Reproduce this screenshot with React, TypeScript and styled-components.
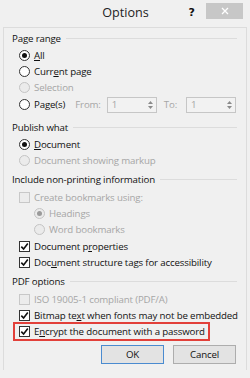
import React from "react";
import styled, { createGlobalStyle, css } from "styled-components";

const Global = createGlobalStyle`
  html, body { margin: 0; padding: 0; background: #f0f0f0; }
  body { font-family: "Open Sans", "Noto Sans", sans-serif; color: #111; }
`;

const Window = styled.div`
  width: 250px;
  height: 378px;
  background: #f0f0f0;
  display: flex;
  flex-direction: column;
  overflow: hidden;
`;

const TitleBar = styled.div`
  height: 27px;
  display: grid;
  grid-template-columns: 1fr auto 1fr;
  align-items: start;
`;

const Title = styled.div`
  grid-column: 2;
  font-size: 12.6px;
  line-height: 26px;
  color: #222;
  padding-left: 1px;
`;

const TitleTools = styled.div`
  grid-column: 3;
  display: flex;
  justify-content: flex-end;
  align-items: center;
  padding: 1px 7px 0 0;
  gap: 11px;
`;

const Help = styled.span`
  font-family: "DejaVu Sans", sans-serif;
  font-weight: bold;
  font-size: 11px;
  line-height: 16px;
  color: #111;
  margin-top: 4px;
`;

const Close = styled.div`
  width: 37px;
  height: 16px;
  background: #c7c7c7;
  color: #fff;
  display: flex;
  align-items: center;
  justify-content: center;
`;

const Frame = styled.div`
  margin: 0 3px 0 3px;
  border: 1px solid #dcdcdc;
  border-bottom: none;
  padding: 2px 9px 6px 8px;
  height: 343px;
  box-sizing: border-box;
  display: flex;
  flex-direction: column;
  font-size: 9.7px;
  letter-spacing: -0.15px;
`;

const Section = styled.div<{ $gap?: number }>`
  display: flex;
  flex-direction: column;
  margin-top: ${(p) => p.$gap ?? 3}px;
`;

const Header = styled.div`
  height: 16px;
  display: flex;
  align-items: center;
  gap: 5px;
  margin-bottom: 1px;
  &::after {
    content: "";
    flex: 1;
    height: 1px;
    background: #dcdcdc;
  }
`;

const Row = styled.div<{ $indent?: number; $tall?: boolean }>`
  height: ${(p) => (p.$tall ? 17 : 16.4)}px;
  display: flex;
  align-items: center;
  padding-left: ${(p) => p.$indent ?? 7}px;
`;

const Highlight = styled.div`
  display: flex;
  align-items: center;
  margin-left: -4px;
  padding: 0 3px 0 4px;
  outline: 2px solid #e2403a;
  height: 15px;
`;

const Label = styled.span<{ $disabled?: boolean }>`
  margin-left: 4px;
  color: ${(p) => (p.$disabled ? "#a6a6a6" : "#111")};
  white-space: nowrap;
  u { text-decoration-thickness: 1px; text-underline-offset: 1px; }
`;

const RadioCircle = styled.span<{ $checked?: boolean; $disabled?: boolean }>`
  width: 11px;
  height: 11px;
  border-radius: 50%;
  box-sizing: border-box;
  border: 1px solid ${(p) => (p.$disabled ? "#c4c4c4" : "#333")};
  background: ${(p) => (p.$disabled ? "#ebebeb" : "#fff")};
  display: flex;
  align-items: center;
  justify-content: center;
  flex: none;
  ${(p) =>
    p.$checked &&
    css`
      &::after {
        content: "";
        width: 5px;
        height: 5px;
        border-radius: 50%;
        background: ${p.$disabled ? "#9a9a9a" : "#111"};
      }
    `}
`;

const CheckBox = styled.span<{ $disabled?: boolean }>`
  width: 11px;
  height: 11px;
  box-sizing: border-box;
  border: 1px solid ${(p) => (p.$disabled ? "#c8c8c8" : "#333")};
  background: ${(p) => (p.$disabled ? "#ececec" : "#fff")};
  display: flex;
  align-items: center;
  justify-content: center;
  flex: none;
`;

const SmallLabel = styled.span<{ $ml: number }>`
  margin-left: ${(p) => p.$ml}px;
  color: #a6a6a6;
`;

const Spin = styled.div<{ $ml: number }>`
  margin-left: ${(p) => p.$ml}px;
  width: 50px;
  height: 16px;
  box-sizing: border-box;
  border: 1px solid #c6c6c6;
  background: #f2f2f2;
  display: flex;
  align-items: center;
  color: #a6a6a6;
  padding-left: 4px;
`;

const SpinValue = styled.span`
  flex: 1;
`;

const SpinArrows = styled.div`
  width: 11px;
  height: 100%;
  display: flex;
  flex-direction: column;
  align-items: center;
  justify-content: center;
  gap: 2px;
`;

const Buttons = styled.div`
  margin-top: auto;
  display: flex;
  justify-content: flex-end;
  gap: 9px;
  padding-right: 1px;
`;

const Button = styled.div<{ $default?: boolean }>`
  width: 63px;
  height: 19px;
  box-sizing: border-box;
  border: 1px solid ${(p) => (p.$default ? "#4a8bd0" : "#adadad")};
  background: #e3e3e3;
  display: flex;
  align-items: center;
  justify-content: center;
  color: #111;
`;

const Tick = () => (
  <svg width="9" height="9" viewBox="0 0 9 9">
    <path d="M1.3 4.6 L3.6 7 L7.8 1.6" fill="none" stroke="#111" strokeWidth="1.6" />
  </svg>
);

const Tri = ({ up }: { up?: boolean }) => (
  <svg width="5" height="3" viewBox="0 0 5 3">
    <path d={up ? "M0 3 L2.5 0 L5 3Z" : "M0 0 L2.5 3 L5 0Z"} fill="#8a8a8a" />
  </svg>
);

const Radio = ({ checked, disabled, indent, children }: { checked?: boolean; disabled?: boolean; indent?: number; children: React.ReactNode }) => (
  <Row $indent={indent}>
    <RadioCircle $checked={checked} $disabled={disabled} />
    <Label $disabled={disabled}>{children}</Label>
  </Row>
);

const Check = ({ checked, disabled, children }: { checked?: boolean; disabled?: boolean; children: React.ReactNode }) => (
  <Row>
    <CheckBox $disabled={disabled}>{checked && <Tick />}</CheckBox>
    <Label $disabled={disabled}>{children}</Label>
  </Row>
);

const SpinBox = ({ ml }: { ml: number }) => (
  <Spin $ml={ml}>
    <SpinValue>1</SpinValue>
    <SpinArrows>
      <Tri up />
      <Tri />
    </SpinArrows>
  </Spin>
);

export default function App() {
  return (
    <Window>
      <Global />
      <TitleBar>
        <Title>Options</Title>
        <TitleTools>
          <Help>?</Help>
          <Close>
            <svg width="8" height="8" viewBox="0 0 8 8">
              <path d="M1 1 L7 7 M7 1 L1 7" stroke="#fff" strokeWidth="1.3" />
            </svg>
          </Close>
        </TitleTools>
      </TitleBar>
      <Frame>
        <Section $gap={0}>
          <Header>Page range</Header>
          <Radio checked><u>A</u>ll</Radio>
          <Radio>Curr<u>e</u>nt page</Radio>
          <Radio disabled>Selection</Radio>
          <Row $tall>
            <RadioCircle />
            <Label>Pa<u>g</u>e(s)</Label>
            <SmallLabel $ml={10}>From:</SmallLabel>
            <SpinBox ml={6} />
            <SmallLabel $ml={7}>To:</SmallLabel>
            <SpinBox ml={9} />
          </Row>
        </Section>
        <Section $gap={6}>
          <Header>Publish what</Header>
          <Radio checked><u>D</u>ocument</Radio>
          <Radio disabled>Document showing markup</Radio>
        </Section>
        <Section>
          <Header>Include non-printing information</Header>
          <Check disabled>Create bookmarks using:</Check>
          <Radio checked disabled indent={22}>Headings</Radio>
          <Radio disabled indent={22}>Word bookmarks</Radio>
          <Check checked>Document p<u>r</u>operties</Check>
          <Check checked>Doc<u>u</u>ment structure tags for accessibility</Check>
        </Section>
        <Section>
          <Header>PDF options</Header>
          <Check disabled>ISO 19005-1 compliant (PDF/A)</Check>
          <Check checked>Bitmap te<u>x</u>t when fonts may not be embedded</Check>
          <Row>
            <Highlight>
              <CheckBox><Tick /></CheckBox>
              <Label>E<u>n</u>crypt the document with a password</Label>
            </Highlight>
          </Row>
        </Section>
        <Buttons>
          <Button $default>OK</Button>
          <Button>Cancel</Button>
        </Buttons>
      </Frame>
    </Window>
  );
}
